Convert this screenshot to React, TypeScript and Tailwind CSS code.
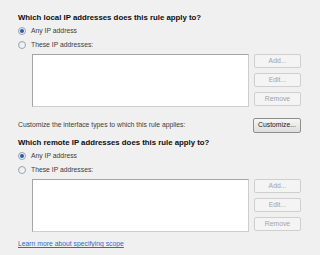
import React from 'react';

const Radio: React.FC<{ checked?: boolean; label: string }> = ({ checked, label }) => (
  <div className="flex items-center h-[8px] gap-[5px]">
    <span className="w-[8px] h-[8px] rounded-full border border-[#9aa3ad] bg-gradient-to-br from-[#e4e6e8] to-[#fafafa] flex items-center justify-center">
      {checked && <span className="w-[4px] h-[4px] rounded-full bg-[#1f5fb0]" />}
    </span>
    <span className="text-[6.8px] leading-[8px] text-[#3c3c3c]">{label}</span>
  </div>
);

const SideButton: React.FC<{ label: string }> = ({ label }) => (
  <div className="h-[14px] w-[47px] border border-[#cfcfcf] rounded-[2px] bg-[#f4f4f4] flex items-center justify-center text-[6.8px] text-[#a3a3a3]">
    {label}
  </div>
);

const AddressBlock: React.FC<{ title: string }> = ({ title }) => (
  <>
    <div className="h-[9px] leading-[9px] text-[7.8px] font-bold text-[#0c0c0c]">{title}</div>
    <div className="mt-[5px]">
      <Radio checked label="Any IP address" />
    </div>
    <div className="mt-[6px]">
      <Radio label="These IP addresses:" />
    </div>
    <div className="mt-[5px] ml-[14px] flex">
      <div className="w-[217px] h-[53px] bg-white border border-[#a5a5a5] border-b-[#cdcdcd] border-r-[#cdcdcd]" />
      <div className="ml-[5px] flex flex-col gap-[5px]">
        <SideButton label="Add..." />
        <SideButton label="Edit..." />
        <SideButton label="Remove" />
      </div>
    </div>
  </>
);

export default function App() {
  return (
    <div
      className="w-[320px] h-[255px] bg-[#f0f0f0] pl-[18px] pt-[13px] overflow-hidden"
      style={{ fontFamily: "'Liberation Sans', Arial, sans-serif" }}
    >
      <AddressBlock title="Which local IP addresses does this rule apply to?" />
      <div className="mt-[11px] w-[283px] h-[15px] flex items-center justify-between">
        <span className="text-[6.8px] text-[#3c3c3c]">Customize the interface types to which this rule applies:</span>
        <div className="h-[15px] w-[48px] border border-[#8e8e8e] rounded-[2px] bg-gradient-to-b from-[#f6f6f6] to-[#dedede] flex items-center justify-center text-[6.8px] text-[#222]">
          Customize...
        </div>
      </div>
      <div className="mt-[5px]">
        <AddressBlock title="Which remote IP addresses does this rule apply to?" />
      </div>
      <div className="mt-[5px] h-[8px] leading-[8px]">
        <span className="text-[6.8px] text-[#3a66c4] underline">Learn more about specifying scope</span>
      </div>
    </div>
  );
}
